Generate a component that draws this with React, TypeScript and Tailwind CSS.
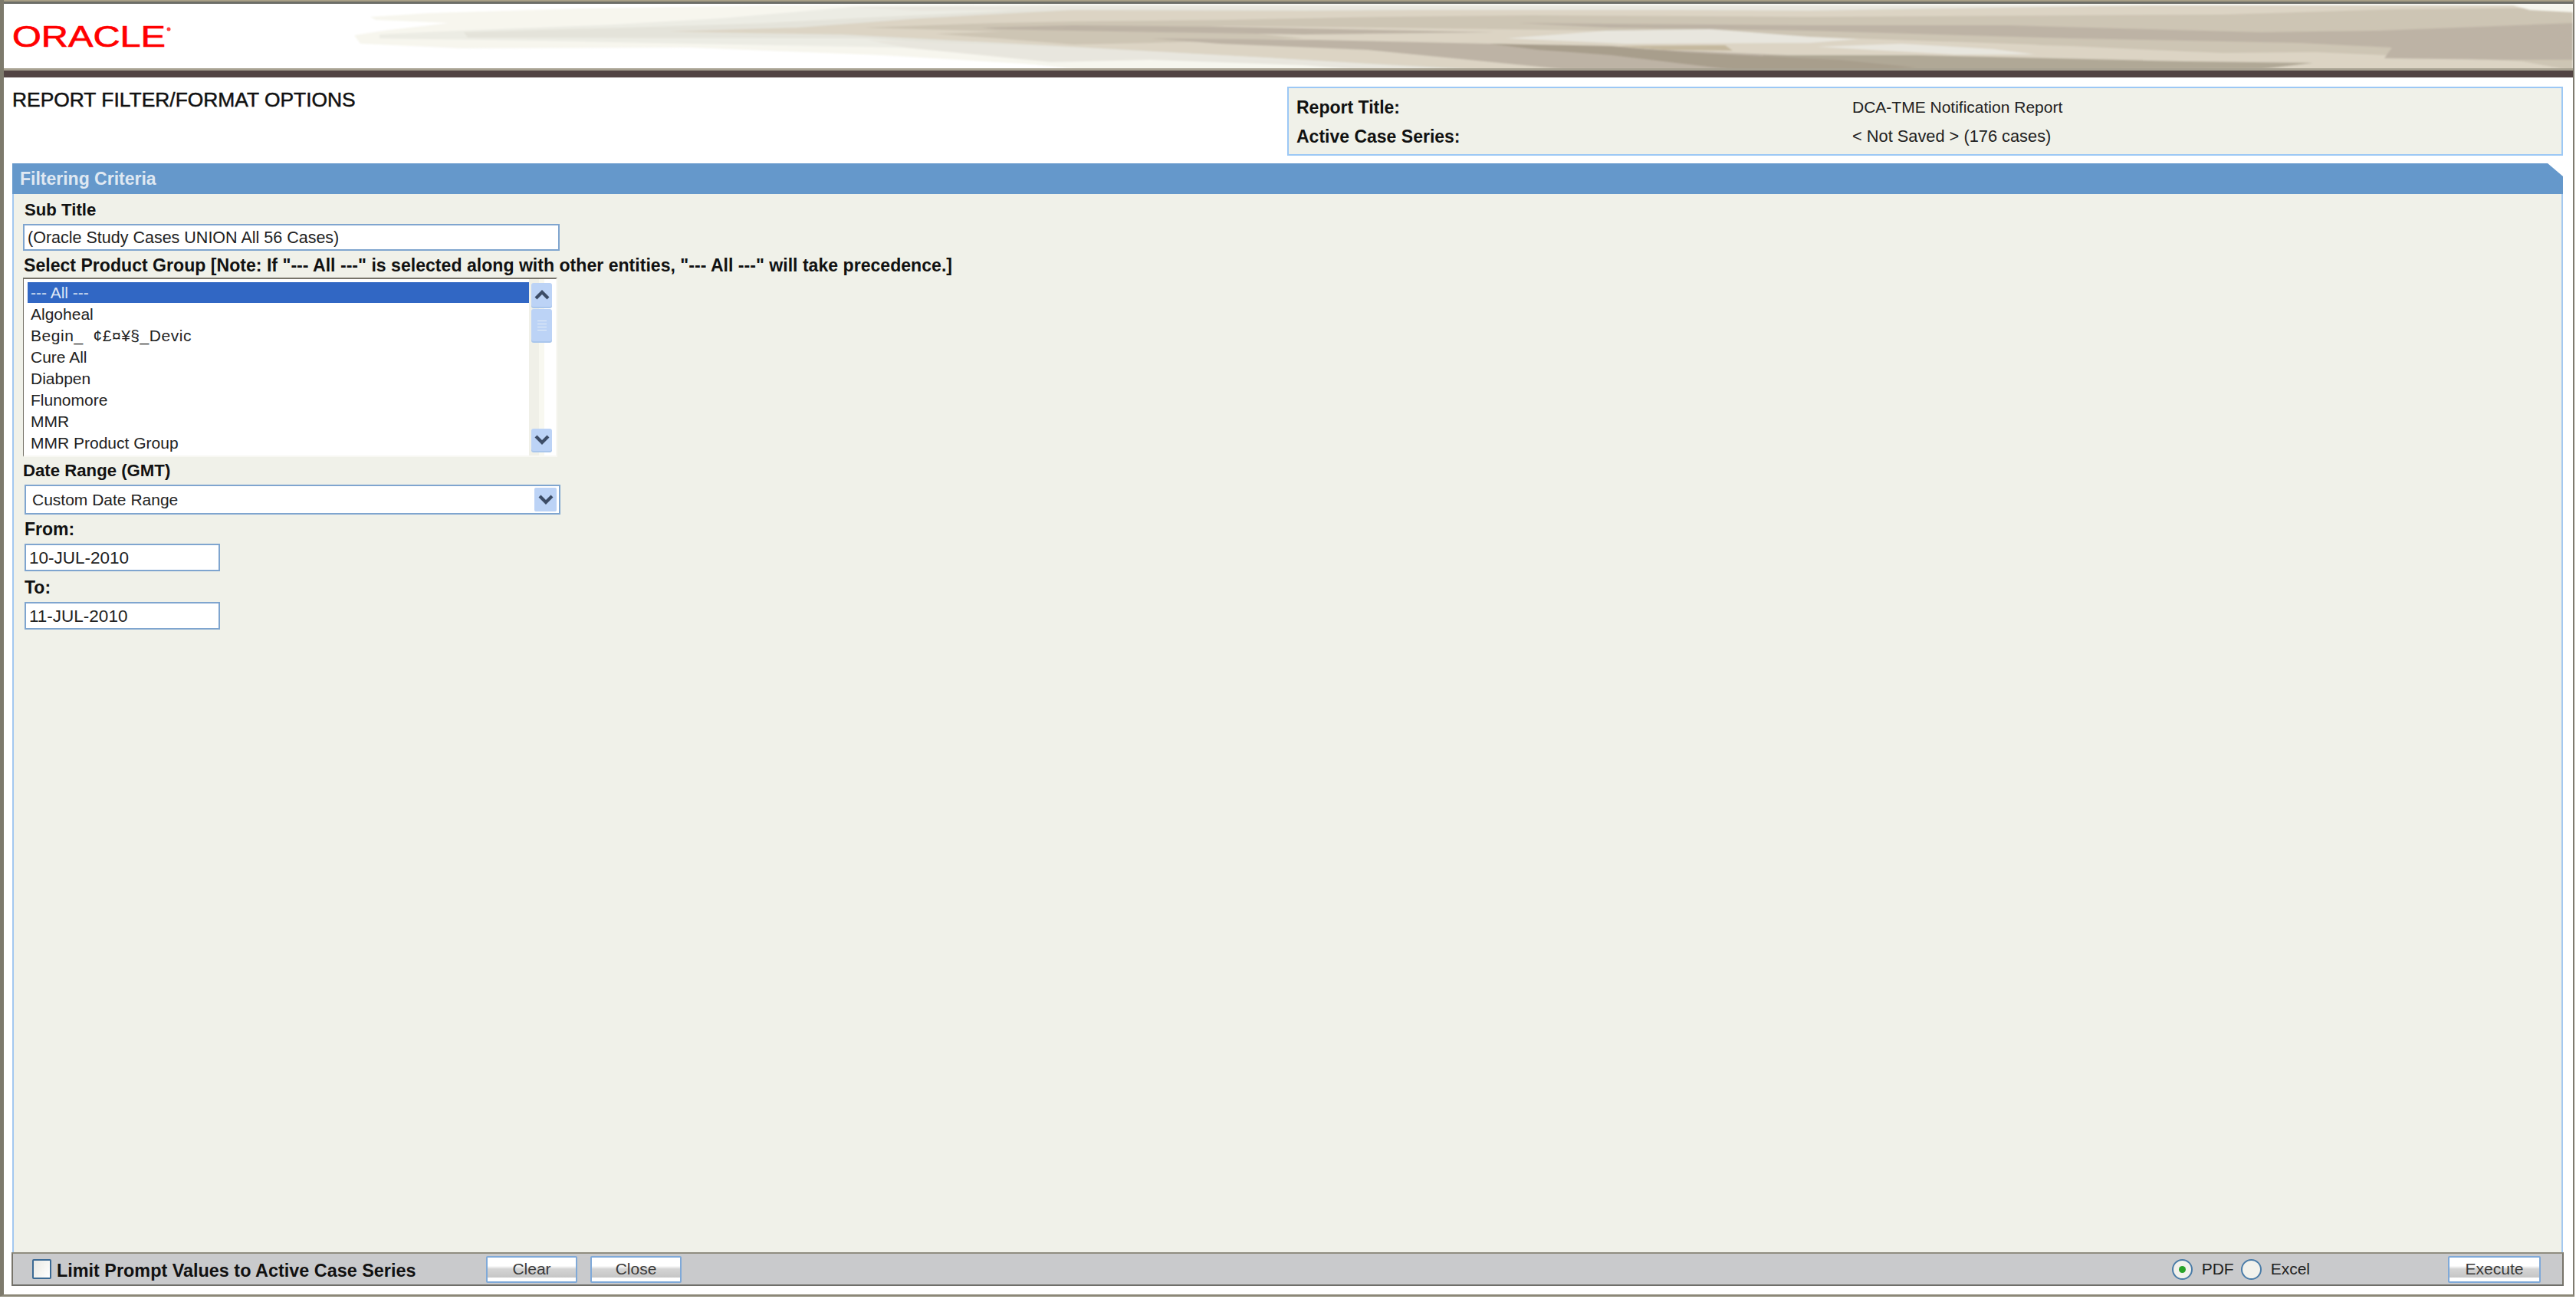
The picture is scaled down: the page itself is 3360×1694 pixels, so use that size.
const font = "font-['Liberation_Sans',Arial,sans-serif]";

const products = ["--- All ---", "Algoheal", "Begin_  ¢£¤¥§_Devic", "Cure All", "Diabpen", "Flunomore", "MMR", "MMR Product Group"];

const Chevron = ({ up = false }: { up?: boolean }) => (
  <svg width="20" height="15" viewBox="0 0 20 15" fill="none">
    <polyline
      points={up ? "2,12 10,4 18,12" : "2,3 10,11 18,3"}
      stroke="#3c4c66"
      strokeWidth="4.2"
    />
  </svg>
);

const Banner = () => (
  <svg width="3351" height="87" viewBox="5 5 3351 87" className="block">
    <defs>
      <filter id="soft" x="0" y="0" width="100%" height="100%">
        <feGaussianBlur stdDeviation="1.2" />
      </filter>
    </defs>
    <rect x="5" y="5" width="3351" height="87" fill="#ffffff" />
    <g filter="url(#soft)">
      <path d="M483 22 L560 17 L760 11 L1000 7 L1400 5 L3356 5 L3356 92 L1500 92 L1400 87 L1150 72 L900 62 L600 63 L470 57 L462 46 L500 40 L585 30 L490 26 Z" fill="#f7f6ee" />
      <path d="M495 45 L600 40 L800 32 L940 24 L1100 10 L1400 8 L3356 8 L3356 92 L1560 92 L1400 80 L1180 62 L900 57 L700 53 L495 50 Z" fill="#ecece4" />
      <path d="M605 42 L850 35 L1000 30 L1150 22 L1300 15 L1400 7 L3356 7 L3356 92 L1690 92 L1400 70 L1133 50 L610 49 Z" fill="#e4e3da" />
      <path d="M872 41 L1040 36 L1200 24 L1400 13 L1700 14 L2000 12 L2360 14 L2800 7 L3356 7 L3356 92 L1950 92 L1700 78 L1400 61 L1100 45 L975 43 Z" fill="#dcd4c4" />
      <path d="M1127 36 L1300 30 L1400 28 L1600 26 L1800 22 L2000 20 L2360 22 L2900 19 L3125 12 L3356 10 L3356 92 L3290 80 L3020 68 L2780 70 L2650 58 L2360 48 L2100 40 L1800 36 L1600 34 L1400 42 L1300 41 Z" fill="#cdc5b4" />
      <path d="M1220 44 L1400 38 L1600 40 L1700 50 L1500 56 L1400 58 L1300 50 Z" fill="#cdc5b4" />
      <path d="M1280 36 L1400 33 L1600 35 L1950 42 L1700 45 L1400 40 L1300 38 Z" fill="#bdb3a5" />
      <path d="M1980 30 L2360 33 L2620 33 L2950 42 L3100 40 L3356 30 L3356 78 L3270 78 L3110 76 L3120 62 L3000 56 L2700 50 L2360 40 L2100 36 Z" fill="#bdb3a5" />
      <path d="M1502 50 L1719 52 L1942 57 L2102 62 L2400 75 L2400 92 L2038 90 L1783 65 L1591 57 Z" fill="#bdb3a5" />
      <path d="M2300 72 L2500 72 L2850 80 L3017 82 L2950 90 L2500 92 L2300 92 Z" fill="#b0a896" />
      <path d="M1942 57 L2102 60 L2197 68 L2400 78 L2500 88 L2440 92 L2261 91 L2102 72 L2006 65 Z" fill="#a89e8c" />
      <path d="M2110 60 L2250 59 L2260 66 L2170 65 Z" fill="#c4b89e" />
      <path d="M1965 50 L2095 40 L2230 38 L2360 48 L2424 51 L2360 56 L2120 57 Z" fill="#e8e6de" />
      <path d="M2370 61 L2480 57 L2600 64 L2655 71 L2550 71 Z" fill="#e8e6de" />
      <path d="M2424 52 L2700 60 L2850 67 L3040 75 L2900 79 L2700 74 L2600 60 Z" fill="#dcd4c4" />
      <path d="M3060 83 L3140 81 L3210 85 L3190 90 L3080 90 Z" fill="#dcd4c4" />
      <path d="M3278 7 L3356 7 L3356 16 L3300 13 Z" fill="#f5f5ed" />
      <path d="M1100 9 L1400 7 L1900 7 L2360 7 L2800 7 L2500 10 L2360 13 L1950 13 L1500 12 L1400 13 L1200 14 Z" fill="#e8e6de" />
      <path d="M1130 52 L1400 62 L1650 75 L1850 88 L1900 92 L1450 90 L1400 84 L1180 62 Z" fill="#e8e6de" />
      <path d="M1330 82 L1500 78 L1700 85 L1790 92 L1420 92 Z" fill="#f6f6ee" />
    </g>
    <rect x="5" y="89" width="3351" height="3" fill="#a8a292" />
    <text
      x="16"
      y="61"
      textLength="200"
      lengthAdjust="spacingAndGlyphs"
      fill="#ff0000"
      stroke="#ff0000"
      strokeWidth="0.7"
      fontFamily="'Liberation Sans', Arial, sans-serif"
      fontSize="38"
    >
      ORACLE
    </text>
    <circle cx="220" cy="38" r="2.5" fill="#ff4040" />
  </svg>
);

const ListBox = () => (
  <div className="mt-1 flex h-[234px] w-[697px] overflow-hidden border-t-2 border-r-2 border-b-2 border-l border-t-[#77746a] border-r-[#f8f8f3] border-b-[#f8f8f3] border-l-[#77746a] bg-white pt-1 pl-[5px]">
    <div className="w-[654px] shrink-0">
      {products.map((p, i) => (
        <div
          key={p}
          className={
            i === 0
              ? "mb-px h-[27px] whitespace-pre bg-[#3167c4] pl-1 text-[21px] leading-[27px] text-[#dfe6f5]"
              : i === 2
                ? "h-[28px] whitespace-pre pl-1 text-[21px] leading-[28px] tracking-[0.55px] text-[#222]"
                : "h-[28px] whitespace-pre pl-1 text-[21px] leading-[28px] text-[#222]"
          }
        >
          {p}
        </div>
      ))}
    </div>
    <div className="-mt-1 flex w-[33px] flex-col bg-[linear-gradient(90deg,#f0f0e8_0,#f0f0e8_13px,#f8f8f0_13px,#f8f8f0_20px,#fff_20px)] pt-[5px] pl-[3px]">
      <div className="flex h-[31px] w-[27px] items-center justify-center rounded-[3px] bg-[#bcd3f6] shadow-[0_2px_0_#a9c6ec]">
        <Chevron up />
      </div>
      <div className="mt-[3px] flex h-[42px] w-[27px] flex-col items-center justify-center gap-[3px] rounded-[3px] bg-[#bcd3f6] shadow-[0_2px_0_#a9c6ec]">
        <div className="h-px w-3 bg-[#e6eef6]" />
        <div className="h-px w-3 bg-[#e6eef6]" />
        <div className="h-px w-3 bg-[#e6eef6]" />
        <div className="h-px w-3 bg-[#e6eef6]" />
      </div>
      <div className="flex h-[114px] shrink-0" />
      <div className="flex h-[29px] w-[27px] items-center justify-center rounded-[3px] bg-[#bcd3f6] shadow-[0_2px_0_#a9c6ec]">
        <Chevron />
      </div>
    </div>
  </div>
);

const BarButton = ({ label, className = "" }: { label: string; className?: string }) => (
  <button
    className={
      "h-[35px] w-[119px] rounded-[2px] border-2 border-[#7fa9d8] bg-[linear-gradient(180deg,#fff_0,#fff_35%,#d4d4d4_48%,#c6c6c6_84%,#fff_84%)] px-0 text-[21px] leading-[30px] text-[#3a3a3a] " +
      className
    }
  >
    {label}
  </button>
);

const Radio = ({ checked = false }: { checked?: boolean }) => (
  <div className="flex h-[27px] w-[27px] items-center justify-center rounded-full border-2 border-[#4a7ca8] bg-[#f2f2ec]">
    {checked && <div className="h-[9px] w-[9px] rounded-full bg-[#2aa32a]" />}
  </div>
);

const labelClass = "font-bold leading-[24px] text-[#111]";
const inputClass =
  "flex items-center border-2 border-[#7fa5cf] bg-white text-[#222]";

export default function App() {
  return (
    <div className={"h-[1694px] w-[3360px] overflow-hidden bg-white " + font}>
      <div className="h-[1691px] w-[3358px] border-r-2 border-b-[3px] border-l-[5px] border-r-[#807c70] border-b-[#8c8878] border-l-[#7d7a6c]">
        <div className="h-[5px] bg-[linear-gradient(180deg,#a89f86_0,#a89f86_40%,#6d6e68_40%)]" />
        <Banner />
        <div className="h-[9px] bg-[#524443]" />

        <div className="pr-[13px] pl-[11px]">
          <div className="flex items-start justify-between pt-3">
            <h1 className="pt-[2px] text-[26.4px] leading-[30px] font-normal text-[#111] [-webkit-text-stroke:0.5px_#111]">
              REPORT FILTER/FORMAT OPTIONS
            </h1>
            <div className="h-[90px] w-[1664px] border-2 border-[#9cc8f5] bg-[#f0f1e9] pt-1.5 pl-2.5">
              <div className="grid grid-cols-[725px_1fr] text-[21px] leading-[38px] text-[#222]">
                <span className="text-[23px] font-bold text-[#111]">Report Title:</span>
                <span>DCA-TME Notification Report</span>
                <span className="text-[23px] font-bold text-[#111]">Active Case Series:</span>
                <span className="text-[21.8px]">&lt; Not Saved &gt; (176 cases)</span>
              </div>
            </div>
          </div>

          <div className="mt-2.5 flex h-[40px] items-center bg-[#6598cb] pl-2.5 text-[23px] font-bold text-[#dfe8f2] [clip-path:polygon(0_0,3307px_0,100%_17px,100%_100%,0_100%)]">
            Filtering Criteria
          </div>

          <div className="h-[1380px] border-x-2 border-x-[#a3c8f0] bg-[#f0f1e9] pt-[9px] pl-3">
            <div className={labelClass + " ml-0.5 text-[22.2px]"}>Sub Title</div>
            <div className={inputClass + " mt-1.5 h-[35px] w-[700px] pt-0.5 pl-1 text-[21.5px]"}>
              (Oracle Study Cases UNION All 56 Cases)
            </div>
            <div className={labelClass + " mt-[7px] ml-px text-[23.1px]"}>
              Select Product Group [Note: If "--- All ---" is selected along with other entities, "--- All ---" will take precedence.]
            </div>
            <ListBox />
            <div className={labelClass + " mt-1.5 text-[22.2px]"}>Date Range (GMT)</div>
            <div className={inputClass + " mt-1.5 ml-0.5 h-[39px] w-[699px] justify-between pr-[3px] pl-2 text-[21px]"}>
              <span>Custom Date Range</span>
              <div className="flex h-[31px] w-[29px] items-center justify-center rounded-[2px] bg-[#bcd3f6]">
                <Chevron />
              </div>
            </div>
            <div className={labelClass + " mt-[7px] ml-0.5 text-[23px]"}>From:</div>
            <div className={inputClass + " mt-[7px] ml-0.5 h-[36px] w-[255px] pt-0.5 pl-1 text-[22.5px]"}>10-JUL-2010</div>
            <div className={labelClass + " mt-[9px] ml-0.5 text-[23px]"}>To:</div>
            <div className={inputClass + " mt-[7px] ml-0.5 h-[36px] w-[255px] pt-0.5 pl-1 text-[22.5px]"}>11-JUL-2010</div>
          </div>

          <div className="-mx-px flex h-[44px] items-center border-x-2 border-t-2 border-b-2 border-x-[#77746a] border-t-[#8f8d80] border-b-[#6f6f6a] bg-[#c9cacc] pl-[25px] text-[21px] text-[#222]">
            <div className="flex w-[592px] shrink-0 items-center">
              <div className="h-[26px] w-[25px] rounded-[2px] border-2 border-[#3b6a94] bg-[linear-gradient(120deg,#e8e8e4_0,#f4f4f0_50%,#ffffff_100%)]" />
              <span className="ml-[7px] pt-[6px] text-[23.4px] font-bold text-[#111]">
                Limit Prompt Values to Active Case Series
              </span>
            </div>
            <BarButton label="Clear" />
            <BarButton label="Close" className="ml-[17px]" />
            <div className="ml-auto flex items-center">
              <Radio checked />
              <span className="mr-[9px] ml-3">PDF</span>
              <Radio />
              <span className="ml-3">Excel</span>
              <BarButton label="Execute" className="mr-[28px] ml-[180px] w-[121px]" />
            </div>
          </div>
        </div>
      </div>
    </div>
  );
}
